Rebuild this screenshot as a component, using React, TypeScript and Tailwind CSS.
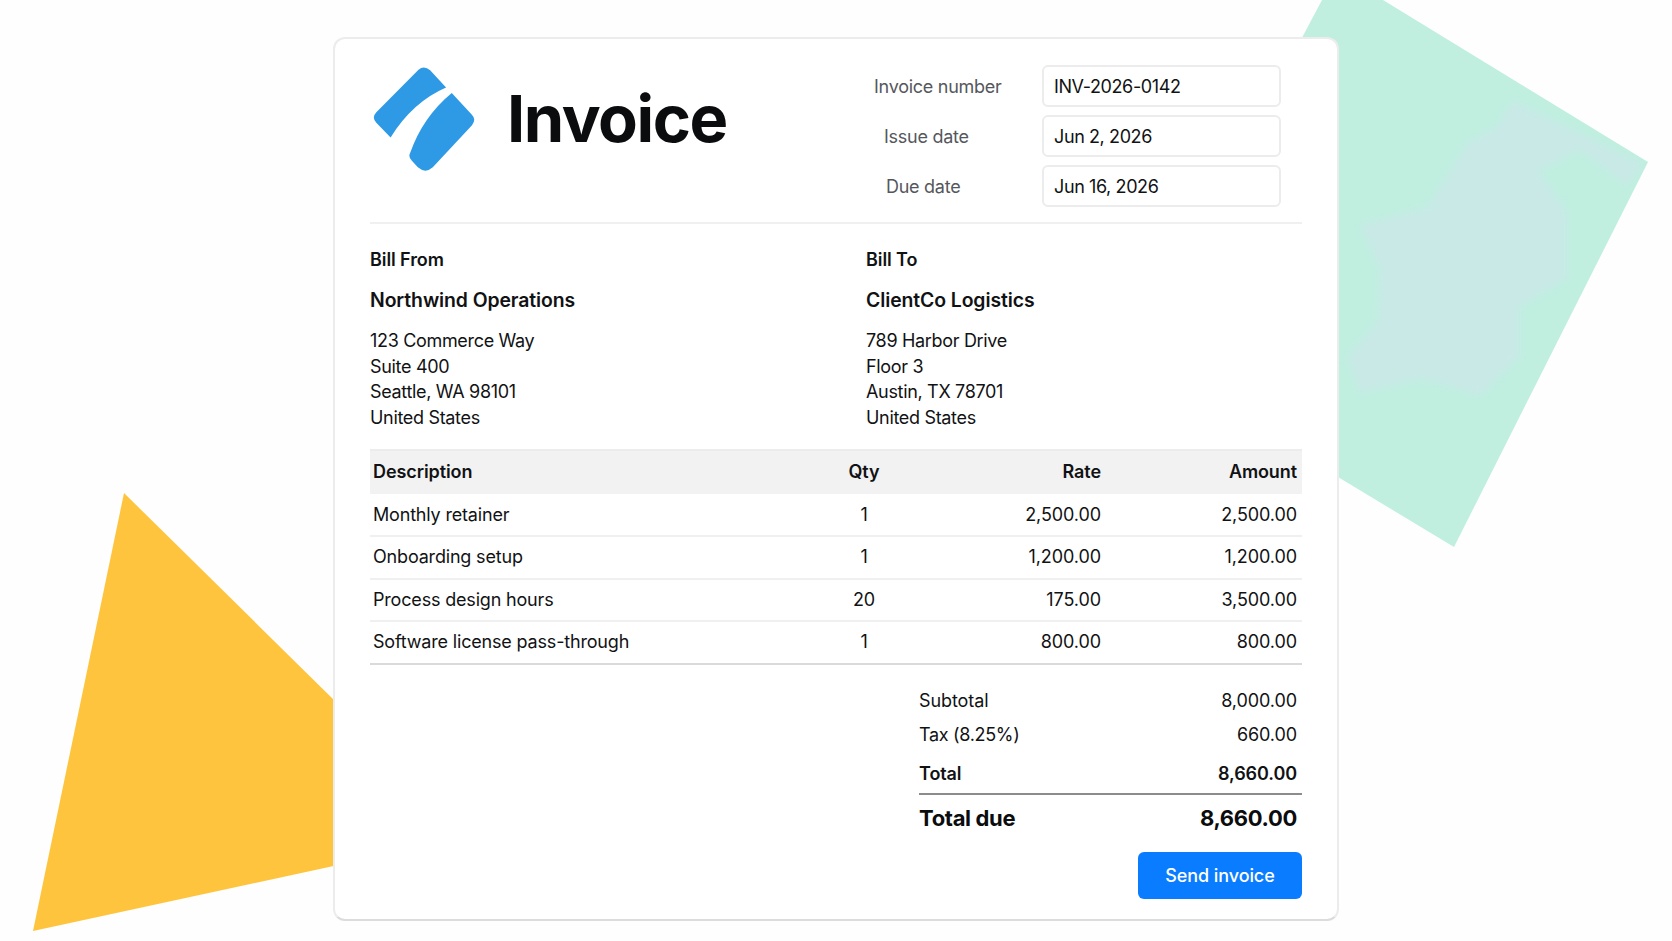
const metaRows = [
  { label: 'Invoice number', value: 'INV-2026-0142', indent: 'pl-0' },
  { label: 'Issue date', value: 'Jun 2, 2026', indent: 'pl-[10px]' },
  { label: 'Due date', value: 'Jun 16, 2026', indent: 'pl-[12px]' },
];

const items = [
  { description: 'Monthly retainer', qty: '1', rate: '2,500.00', amount: '2,500.00' },
  { description: 'Onboarding setup', qty: '1', rate: '1,200.00', amount: '1,200.00' },
  { description: 'Process design hours', qty: '20', rate: '175.00', amount: '3,500.00' },
  { description: 'Software license pass-through', qty: '1', rate: '800.00', amount: '800.00' },
];

const parties = [
  {
    title: 'Bill From',
    name: 'Northwind Operations',
    lines: ['123 Commerce Way', 'Suite 400', 'Seattle, WA 98101', 'United States'],
  },
  {
    title: 'Bill To',
    name: 'ClientCo Logistics',
    lines: ['789 Harbor Drive', 'Floor 3', 'Austin, TX 78701', 'United States'],
  },
];

function Logo() {
  return (
    <svg viewBox="160 140 307 316" className="w-[102px] h-[105px] shrink-0">
      <path
        d="M297 148 Q314 134 332 150 L380 202 Q280 245 213 352 L170 308 Q155 292 170 276 Z"
        fill="#2e9ae6"
      />
      <path
        d="M397 218 L457 283 Q472 298 458 315 L340 442 Q318 462 295 442 L277 422 Q265 410 272 398 Q310 290 397 218 Z"
        fill="#2e9ae6"
      />
    </svg>
  );
}

function Shapes() {
  return (
    <svg viewBox="0 0 1672 941" className="absolute inset-0 w-[1672px] h-[941px]">
      <defs>
        <clipPath id="mint">
          <polygon points="1322,0 1383,0 1648,162 1454,547 1134,354" />
        </clipPath>
      </defs>
      <polygon points="124,493 472,836 33,931" fill="#ffc43d" />
      <polygon points="1322,0 1383,0 1648,162 1454,547 1134,354" fill="#c0efe0" />
      <g clipPath="url(#mint)">
        <path
          className="blur-[3px]"
          d="M1513 100 L1643 164 L1627 186 L1580 150 L1540 171 L1567 211 L1567 279 L1520 307 L1520 357 L1480 396 L1423 379 L1360 393 L1347 357 L1377 321 L1380 271 L1360 225 L1427 207 L1467 143 L1497 125 Z"
          fill="#c8e9e6"
        />
      </g>
    </svg>
  );
}

export default function App() {
  return (
    <div className="relative min-h-screen overflow-hidden bg-[#fefefe] font-['Inter',sans-serif] text-[18px] leading-[26px] tracking-[-0.005em] text-[#111214]">
      <Shapes />

      <div className="relative mx-auto mt-[37px] h-[884px] w-[1006px] rounded-[12px] border-2 border-[#ececec] border-b-[#dcdcdc] bg-white px-[35px]">
        {/* Header */}
        <div className="flex justify-between border-b-2 border-[#f0f0f0] pt-[26px] pb-[15px]">
          <div className="flex items-start">
            <div className="ml-[3px] pt-[2px]">
              <Logo />
            </div>
            <h1 className="ml-[32px] mt-[18px] text-[65px] leading-[72px] font-bold tracking-[-0.022em] text-[#0b0c0e]">
              Invoice
            </h1>
          </div>
          <div className="mr-[21px] flex flex-col gap-[8px]">
            {metaRows.map((row) => (
              <div key={row.label} className="flex items-center">
                <div className={`w-[168px] ${row.indent} pt-[1px] tracking-[-0.015em] text-[#55575c]`}>{row.label}</div>
                <div className="flex h-[42px] w-[239px] items-center rounded-[6px] border-2 border-[#ececec] px-[10px] pt-[1px] tracking-[-0.022em]">
                  {row.value}
                </div>
              </div>
            ))}
          </div>
        </div>

        {/* Parties */}
        <div className="grid grid-cols-[496px_1fr] pt-[23px]">
          {parties.map((party) => (
            <div key={party.title}>
              <div className="font-semibold">{party.title}</div>
              <div className="mt-[14px] text-[19.4px] font-semibold">{party.name}</div>
              <div className="mt-[15px] leading-[25.6px] tracking-[-0.018em]">
                {party.lines.map((line, i) => (
                  <div key={i}>{line}</div>
                ))}
              </div>
            </div>
          ))}
        </div>

        {/* Line items */}
        <div className="mt-[19px] border-b-2 border-[#dadada]">
          <div className="grid h-[45px] grid-cols-[446px_90px_192px_1fr] items-center border-t-2 border-[#ececec] bg-[#f2f2f2] pb-[2px] pl-[3px] pr-[5px] font-semibold">
            <div>Description</div>
            <div className="text-center">Qty</div>
            <div className="text-right">Rate</div>
            <div className="text-right">Amount</div>
          </div>
          {items.map((item, i) => (
            <div
              key={item.description}
              className={`grid grid-cols-[446px_90px_192px_1fr] items-center pl-[3px] pr-[5px] ${i < items.length - 1 ? 'h-[42.6px] border-b-2 border-[#f0f0f0]' : 'h-[40.6px]'}`}
            >
              <div className="tracking-[-0.01em]">{item.description}</div>
              <div className="text-center">{item.qty}</div>
              <div className="text-right">{item.rate}</div>
              <div className="text-right">{item.amount}</div>
            </div>
          ))}
        </div>

        {/* Totals */}
        <div className="ml-auto mt-[19px] w-[383px]">
          <div className="flex h-[34px] items-center justify-between pr-[5px]">
            <span>Subtotal</span>
            <span>8,000.00</span>
          </div>
          <div className="flex h-[34px] items-center justify-between pr-[5px]">
            <span className="tracking-[-0.018em]">Tax (8.25%)</span>
            <span>660.00</span>
          </div>
          <div className="flex h-[43px] items-center justify-between border-b-2 border-[#8c8c8c] pr-[5px] pt-[3px] font-semibold">
            <span>Total</span>
            <span>8,660.00</span>
          </div>
          <div className="flex h-[46px] items-center justify-between pr-[5px] text-[22px] font-bold tracking-[-0.015em] text-[#0b0c0e]">
            <span>Total due</span>
            <span>8,660.00</span>
          </div>
        </div>

        <div className="mt-[11px] flex justify-end">
          <button className="h-[47px] w-[164px] rounded-[6px] bg-[#0a7cff] pt-[2px] text-[18px] font-medium text-white">
            Send invoice
          </button>
        </div>
      </div>
    </div>
  );
}
